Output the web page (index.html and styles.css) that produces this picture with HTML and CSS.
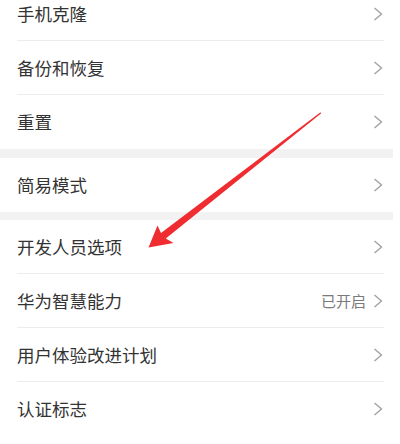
FILE: index.html
```html
<!DOCTYPE html>
<html lang="zh-CN">
<head>
  <meta charset="UTF-8">
  <meta name="viewport" content="width=device-width, initial-scale=1.0">
  <title>系统设置</title>
  <link rel="stylesheet" href="styles.css">
</head>
<body>
  <div class="settings">
    <div class="group">
      <div class="item"><span class="label">手机克隆</span><svg class="chevron" viewBox="0 0 10 14"><polyline points="1.5,1 8.5,7 1.5,13"/></svg></div>
      <div class="item"><span class="label">备份和恢复</span><svg class="chevron" viewBox="0 0 10 14"><polyline points="1.5,1 8.5,7 1.5,13"/></svg></div>
      <div class="item"><span class="label">重置</span><svg class="chevron" viewBox="0 0 10 14"><polyline points="1.5,1 8.5,7 1.5,13"/></svg></div>
    </div>
    <div class="gap"></div>
    <div class="group">
      <div class="item"><span class="label">简易模式</span><svg class="chevron" viewBox="0 0 10 14"><polyline points="1.5,1 8.5,7 1.5,13"/></svg></div>
    </div>
    <div class="gap gap-small"></div>
    <div class="group">
      <div class="item"><span class="label">开发人员选项</span><svg class="chevron" viewBox="0 0 10 14"><polyline points="1.5,1 8.5,7 1.5,13"/></svg></div>
      <div class="item"><span class="label">华为智慧能力</span><span class="value">已开启</span><svg class="chevron" viewBox="0 0 10 14"><polyline points="1.5,1 8.5,7 1.5,13"/></svg></div>
      <div class="item"><span class="label">用户体验改进计划</span><svg class="chevron" viewBox="0 0 10 14"><polyline points="1.5,1 8.5,7 1.5,13"/></svg></div>
      <div class="item"><span class="label">认证标志</span><svg class="chevron" viewBox="0 0 10 14"><polyline points="1.5,1 8.5,7 1.5,13"/></svg></div>
    </div>
  </div>

  <!-- red arrow pointing at the developer options -->
  <svg class="arrow" width="400" height="444" viewBox="0 0 400 444">
    <path d="M320.5,112.3 L161,233 L157.5,225.5 L148.5,247.5 L173.5,243 L165.8,238.6 L321,113.6 Z" fill="#ef2d31"/>
  </svg>
</body>
</html>
```

FILE: styles.css
```css
body {
  margin: 0;
  padding: 0;
  background: #fff;
  font-family: "Noto Sans CJK SC", "Noto Sans", sans-serif;
  overflow: hidden;
}

.settings {
  margin-top: -13px;
  width: 393px;
}

/* each row is 54px including its 1px divider */
.item {
  display: flex;
  align-items: center;
  height: 53px;
  margin-left: 17px;
  margin-right: 9px;
  border-bottom: 1px solid #ececec;
}

.group .item:last-child {
  border-bottom: 1px solid transparent;
}

.label {
  flex: 1;
  font-size: 17.5px;
  color: #333;
}

.value {
  font-size: 15px;
  color: #7a7a7a;
  margin-right: 7px;
}

.chevron {
  width: 10px;
  height: 14px;
  fill: none;
  stroke: #a3a3a3;
  stroke-width: 1.4;
  margin-right: 1px;
}

.gap {
  height: 9px;
  background: #f2f2f2;
}

.gap-small {
  height: 8px;
}

.arrow {
  position: absolute;
  left: 0;
  top: 0;
}
```
